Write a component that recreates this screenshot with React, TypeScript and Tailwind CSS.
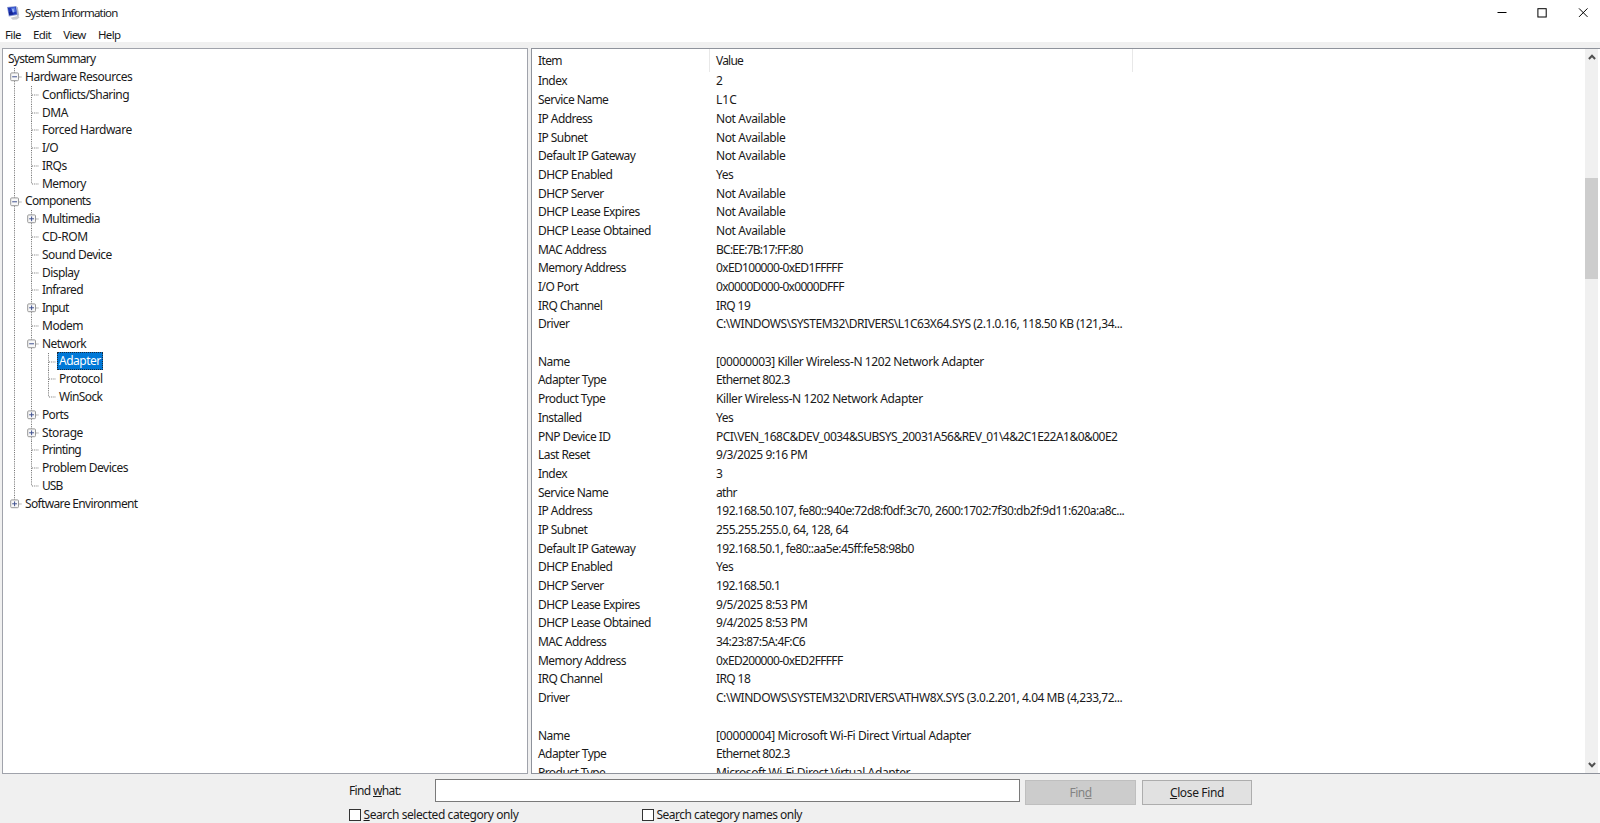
import React from 'react';

interface TreeNode {
  label: string;
  // one letter per guide column: v = line, t = branch, l = last branch, p = plus, m = minus, e = last plus
  guides: string;
  tracking: string;
  selected?: boolean;
}

const TREE: TreeNode[] = [
  { label: 'Hardware Resources', guides: 'm', tracking: 'tracking-[-0.49px]' },
  { label: 'Conflicts/Sharing', guides: 'vt', tracking: 'tracking-[-0.56px]' },
  { label: 'DMA', guides: 'vt', tracking: 'tracking-[-0.5px]' },
  { label: 'Forced Hardware', guides: 'vt', tracking: 'tracking-[-0.46px]' },
  { label: 'I/O', guides: 'vt', tracking: 'tracking-[-0.6px]' },
  { label: 'IRQs', guides: 'vt', tracking: 'tracking-[-0.5px]' },
  { label: 'Memory', guides: 'vl', tracking: 'tracking-[-0.55px]' },
  { label: 'Components', guides: 'm', tracking: 'tracking-[-0.68px]' },
  { label: 'Multimedia', guides: 'vp', tracking: 'tracking-[-0.62px]' },
  { label: 'CD-ROM', guides: 'vt', tracking: 'tracking-[-0.35px]' },
  { label: 'Sound Device', guides: 'vt', tracking: 'tracking-[-0.54px]' },
  { label: 'Display', guides: 'vt', tracking: 'tracking-[-0.55px]' },
  { label: 'Infrared', guides: 'vt', tracking: 'tracking-[-0.62px]' },
  { label: 'Input', guides: 'vp', tracking: 'tracking-[-0.85px]' },
  { label: 'Modem', guides: 'vt', tracking: 'tracking-[-0.5px]' },
  { label: 'Network', guides: 'vm', tracking: 'tracking-[-0.6px]' },
  { label: 'Adapter', guides: 'vvt', tracking: 'tracking-[-0.5px]', selected: true },
  { label: 'Protocol', guides: 'vvt', tracking: 'tracking-[-0.42px]' },
  { label: 'WinSock', guides: 'vvl', tracking: 'tracking-[-0.62px]' },
  { label: 'Ports', guides: 'vp', tracking: 'tracking-[-0.65px]' },
  { label: 'Storage', guides: 'vp', tracking: 'tracking-[-0.4px]' },
  { label: 'Printing', guides: 'vt', tracking: 'tracking-[-0.75px]' },
  { label: 'Problem Devices', guides: 'vt', tracking: 'tracking-[-0.5px]' },
  { label: 'USB', guides: 'vl', tracking: 'tracking-[-0.9px]' },
  { label: 'Software Environment', guides: 'e', tracking: 'tracking-[-0.65px]' },
];

const ROWS: [string, string, string][] = [
  ['Index', '2', ''],
  ['Service Name', 'L1C', ''],
  ['IP Address', 'Not Available', 'tracking-[-0.4px]'],
  ['IP Subnet', 'Not Available', 'tracking-[-0.4px]'],
  ['Default IP Gateway', 'Not Available', 'tracking-[-0.4px]'],
  ['DHCP Enabled', 'Yes', 'tracking-[-0.5px]'],
  ['DHCP Server', 'Not Available', 'tracking-[-0.4px]'],
  ['DHCP Lease Expires', 'Not Available', 'tracking-[-0.4px]'],
  ['DHCP Lease Obtained', 'Not Available', 'tracking-[-0.4px]'],
  ['MAC Address', 'BC:EE:7B:17:FF:80', 'tracking-[-0.75px]'],
  ['Memory Address', '0xED100000-0xED1FFFFF', 'tracking-[-0.66px]'],
  ['I/O Port', '0x0000D000-0x0000DFFF', 'tracking-[-0.68px]'],
  ['IRQ Channel', 'IRQ 19', 'tracking-[-0.6px]'],
  ['Driver', 'C:\\WINDOWS\\SYSTEM32\\DRIVERS\\L1C63X64.SYS (2.1.0.16, 118.50 KB (121,34...', 'tracking-[-0.47px]'],
  ['', '', ''],
  ['Name', '[00000003] Killer Wireless-N 1202 Network Adapter', 'tracking-[-0.41px]'],
  ['Adapter Type', 'Ethernet 802.3', 'tracking-[-0.62px]'],
  ['Product Type', 'Killer Wireless-N 1202 Network Adapter', 'tracking-[-0.4px]'],
  ['Installed', 'Yes', 'tracking-[-0.5px]'],
  ['PNP Device ID', 'PCI\\VEN_168C&DEV_0034&SUBSYS_20031A56&REV_01\\4&2C1E22A1&0&00E2', 'tracking-[-0.53px]'],
  ['Last Reset', '9/3/2025 9:16 PM', 'tracking-[-0.42px]'],
  ['Index', '3', ''],
  ['Service Name', 'athr', 'tracking-[-0.7px]'],
  ['IP Address', '192.168.50.107, fe80::940e:72d8:f0df:3c70, 2600:1702:7f30:db2f:9d11:620a:a8c...', 'tracking-[-0.55px]'],
  ['IP Subnet', '255.255.255.0, 64, 128, 64', 'tracking-[-0.51px]'],
  ['Default IP Gateway', '192.168.50.1, fe80::aa5e:45ff:fe58:98b0', 'tracking-[-0.57px]'],
  ['DHCP Enabled', 'Yes', 'tracking-[-0.5px]'],
  ['DHCP Server', '192.168.50.1', 'tracking-[-0.6px]'],
  ['DHCP Lease Expires', '9/5/2025 8:53 PM', 'tracking-[-0.42px]'],
  ['DHCP Lease Obtained', '9/4/2025 8:53 PM', 'tracking-[-0.42px]'],
  ['MAC Address', '34:23:87:5A:4F:C6', 'tracking-[-0.6px]'],
  ['Memory Address', '0xED200000-0xED2FFFFF', 'tracking-[-0.66px]'],
  ['IRQ Channel', 'IRQ 18', 'tracking-[-0.6px]'],
  ['Driver', 'C:\\WINDOWS\\SYSTEM32\\DRIVERS\\ATHW8X.SYS (3.0.2.201, 4.04 MB (4,233,72...', 'tracking-[-0.46px]'],
  ['', '', ''],
  ['Name', '[00000004] Microsoft Wi-Fi Direct Virtual Adapter', 'tracking-[-0.4px]'],
  ['Adapter Type', 'Ethernet 802.3', 'tracking-[-0.62px]'],
  ['Product Type', 'Microsoft Wi-Fi Direct Virtual Adapter', 'tracking-[-0.38px]'],
];

const Guide = ({ kind }: { kind: string }) => {
  const boxed = kind === 'm' || kind === 'p' || kind === 'e';
  const half = kind === 'l' || kind === 'e';
  return (
    <svg className="h-full w-[17px] shrink-0 overflow-visible" viewBox="0 0 17 17.79" fill="none">
      <path d={half ? 'M8.5 0V9' : 'M8.5 0V17.79'} stroke="#777" strokeDasharray="1.1 1.1" />
      {kind !== 'v' && <path d="M9 9H16" stroke="#777" strokeDasharray="1.1 1.1" />}
      {boxed && (
        <>
          <rect x="4.7" y="4.9" width="7.8" height="7.8" rx="1" fill="#f8f8f8" stroke="#979797" />
          <path d="M6.2 8.8H11" stroke="#41518f" />
          {kind !== 'm' && <path d="M8.6 6.4V11.2" stroke="#41518f" />}
        </>
      )}
    </svg>
  );
};

// Monitor tilted to the left with a grey tower and base behind it
const AppIcon = () => (
  <svg className="h-[14px] w-[14px]" viewBox="0 0 14 14">
    <path d="M3.5 11.8l8-2 1 1.6-2.6 2.1-4.2.2z" fill="#c9cbcf" />
    <path d="M9.4 1.2l1.4-.2 1.4 8.2-2 1.2z" fill="#b4b8c6" />
    <path d="M0 1L9.4 0l1.3 9.1-8.9 1.5z" fill="#8c9cd2" />
    <path d="M.8 1.7L8.8.8l1.1 7.5-7.6 1.3z" fill="#2038b8" />
    <path d="M4 1.8l4.2-.5.7 4.2-3.2 1.2z" fill="#5678e0" />
    <path d="M5 3l1.6-.2.5 3-1.2.6z" fill="#a3b9f4" />
    <path d="M1.9 6.6l2.8-1.5 1.6 3.2-4 .6z" fill="#14248f" />
  </svg>
);

const Chevron = ({ down }: { down?: boolean }) => (
  <svg className="h-[6px] w-[8px]" viewBox="0 0 8 6" fill="none" stroke="#505050" strokeWidth="2">
    <path d={down ? 'M.9 1L4 4.2 7.1 1' : 'M.9 5L4 1.8 7.1 5'} />
  </svg>
);

const App = () => {
  return (
    <div className="flex h-[823px] w-[1600px] flex-col overflow-hidden bg-[#f0f0f0] font-['Noto_Sans','Open_Sans',sans-serif] text-[12px] leading-none text-[#1a1a1a]">
      {/* Title bar */}
      <div className="flex h-[26px] shrink-0 items-center bg-white pl-[7px]">
        <AppIcon />
        <span className="ml-[4px] pb-px text-[11.5px] tracking-[-0.81px]">System Information</span>
        <div className="ml-auto flex items-center pr-[9px] text-black">
          <svg className="h-[10px] w-[94px]" viewBox="0 0 94 10" fill="none" stroke="currentColor">
            <path d="M.5 4.5H9.5" />
            <rect x="40.9" y=".7" width="8.3" height="8.3" />
            <path d="M82 .4L90.5 8.9M90.5 .4L82 8.9" />
          </svg>
        </div>
      </div>

      {/* Menu */}
      <div className="flex h-[16px] shrink-0 items-center gap-[12.2px] bg-white pt-[2px] pl-[5px] text-[11.5px] tracking-[-0.65px]">
        <span>File</span>
        <span>Edit</span>
        <span>View</span>
        <span>Help</span>
      </div>

      <div className="mt-[6px] flex h-[726px] shrink-0 gap-[3px] pl-[2px]">
        {/* Category tree */}
        <div className="w-[526px] shrink-0 overflow-hidden border border-[#a0a3ab] bg-white pt-[1.3px]">
          <div className="flex h-[17.79px] items-center pl-[5px] tracking-[-0.77px]">System Summary</div>
          {TREE.map((node) => (
            <div key={node.label} className={`flex h-[17.79px] items-center pl-[3px] ${node.tracking}`}>
              {node.guides.split('').map((g, i) => (
                <Guide key={i} kind={g} />
              ))}
              <span
                className={
                  node.selected
                    ? 'flex h-[18px] items-center bg-[#0078d7] pr-[2px] pl-[2px] text-white outline-1 -outline-offset-1 outline-dotted outline-[#1c2b3a]'
                    : 'px-[2px]'
                }
              >
                {node.label}
              </span>
            </div>
          ))}
        </div>

        {/* Details list */}
        <div className="flex min-w-0 flex-1 border-y border-l border-[#8e929b] bg-white">
          <div className="min-w-0 flex-1 overflow-hidden">
            <div className="flex h-[23.1px] items-center">
              <span className="flex h-full w-[178px] items-center border-r border-[#e8e8e8] pl-[6px] tracking-[-0.6px]">Item</span>
              <span className="flex h-full w-[423px] items-center border-r border-[#e8e8e8] pl-[6px] tracking-[-0.8px]">Value</span>
            </div>
            {ROWS.map(([item, value, tracking], i) => (
              <div key={i} className="flex h-[18.69px] items-center whitespace-pre">
                <span className="w-[184px] shrink-0 pl-[6px] tracking-[-0.56px]">{item}</span>
                <span className={tracking}>{value}</span>
              </div>
            ))}
          </div>
          <div className="mr-[2px] flex w-[13px] flex-col items-center bg-[#f0f0f0] pt-[5px] pb-[5px]">
            <Chevron />
            <div className="mt-[118px] h-[101px] w-full bg-[#cdcdcd]" />
            <div className="mt-auto flex">
              <Chevron down />
            </div>
          </div>
        </div>
      </div>

      {/* Find bar */}
      <div className="mt-[5px] flex h-[25px] shrink-0 items-start pl-[349px]">
        <span className="w-[86px] pt-[6px] tracking-[-0.65px]">
          Find <u>w</u>hat:
        </span>
        <div className="h-[23px] w-[585px] border border-[#7a7a7a] bg-white" />
        <div className="mt-px ml-[5px] flex h-[25px] w-[111px] items-center justify-center border border-[#bfbfbf] bg-[#cccccc] tracking-[-0.5px] text-[#838383]">
          Fin<u>d</u>
        </div>
        <div className="mt-px ml-[6px] flex h-[25px] w-[110px] items-center justify-center border border-[#adadad] bg-[#e1e1e1]">
          <span className="tracking-[-0.35px]">
            <u>C</u>lose Find
          </span>
        </div>
      </div>
      <div className="mt-[5px] flex shrink-0 items-center pl-[349px]">
        <div className="flex w-[293px] items-center gap-[2.5px]">
          <span className="h-[12px] w-[12px] border border-[#333] bg-white" />
          <span className="tracking-[-0.42px]">
            <u>S</u>earch selected category only
          </span>
        </div>
        <div className="flex items-center gap-[2.5px]">
          <span className="h-[12px] w-[12px] border border-[#333] bg-white" />
          <span className="tracking-[-0.5px]">
            Sea<u>r</u>ch category names only
          </span>
        </div>
      </div>
    </div>
  );
};

export default App;
